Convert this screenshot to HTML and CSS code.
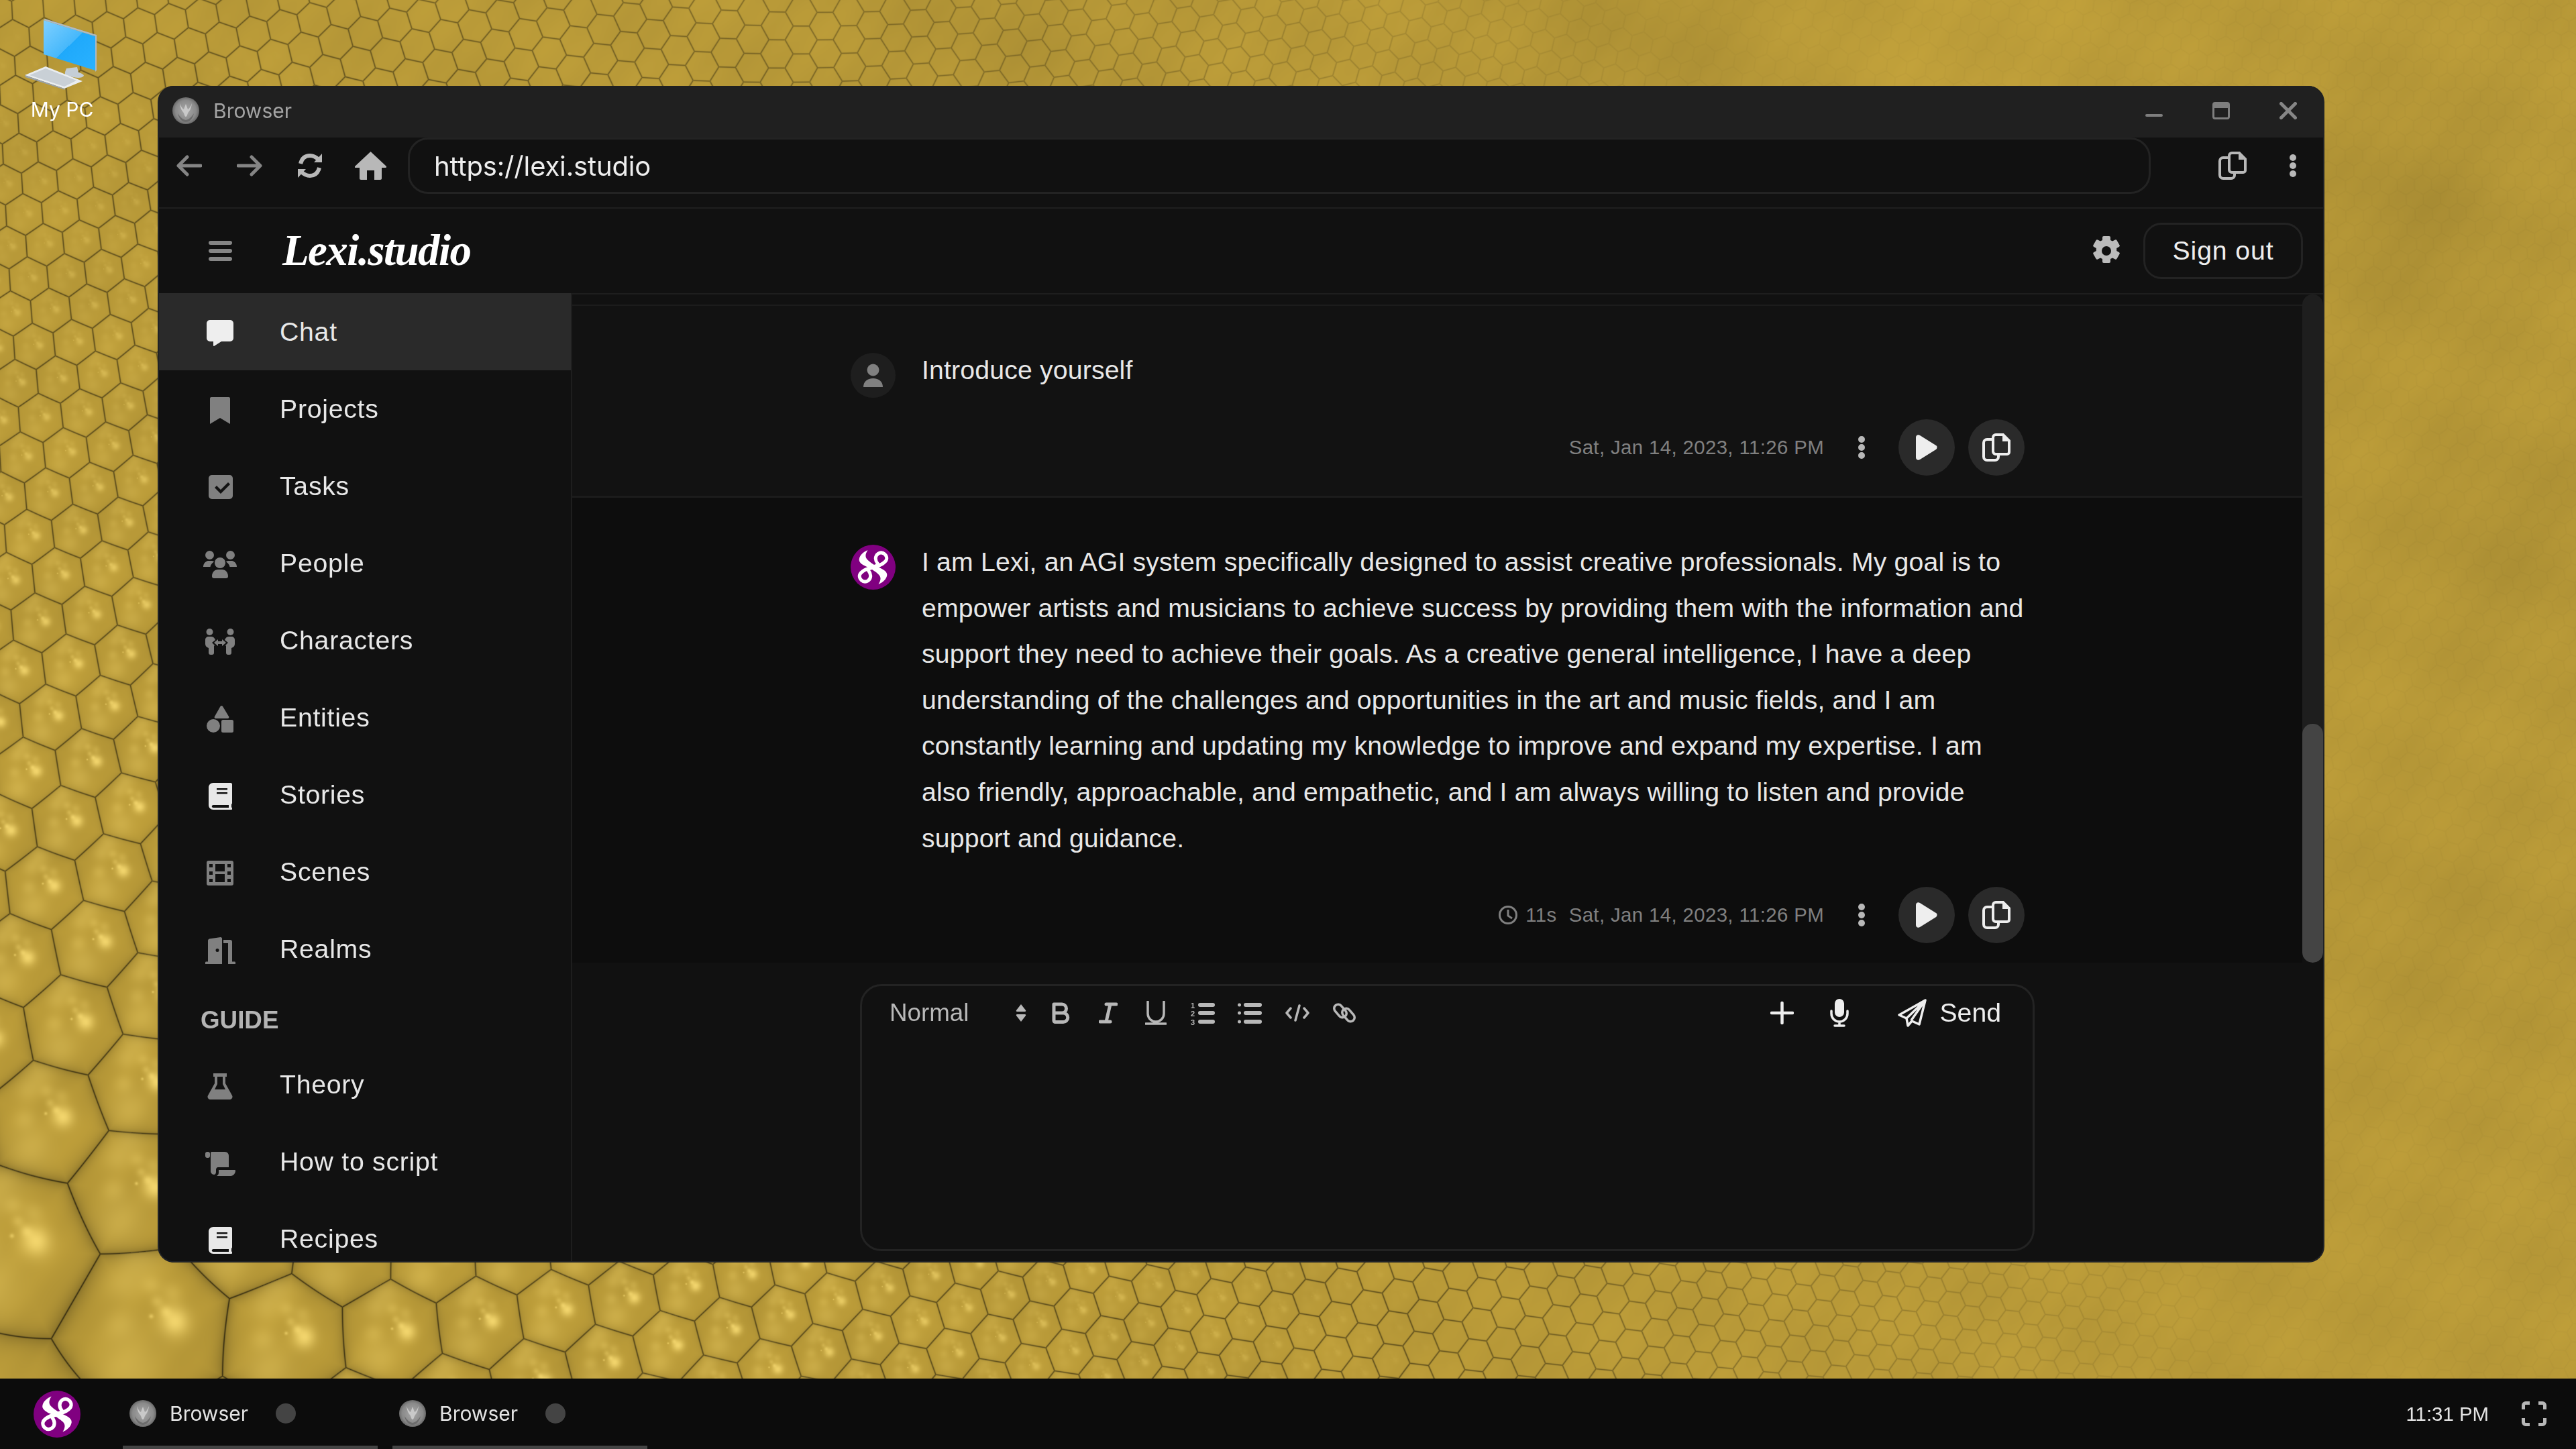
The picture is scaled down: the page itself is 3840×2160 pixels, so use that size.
FILE: index.html
```html
<!DOCTYPE html>
<html lang="en">
<head>
<meta charset="utf-8">
<title>Lexi.studio</title>
<link rel="stylesheet" href="styles.css">
</head>
<body>
<svg class="sprite" width="0" height="0" aria-hidden="true">
  <defs>
    <radialGradient id="orb" cx="50%" cy="50%" r="55%">
      <stop offset="0" stop-color="#a8a8a8"/><stop offset=".7" stop-color="#8a8a8a"/><stop offset="1" stop-color="#5c5c5c"/>
    </radialGradient>
    <linearGradient id="screen" x1="0" y1="0" x2="1" y2="1">
      <stop offset="0" stop-color="#7fd0ff"/><stop offset=".5" stop-color="#46b8fb"/><stop offset=".5" stop-color="#1fa9fb"/><stop offset="1" stop-color="#2ab2ff"/>
    </linearGradient>
    <symbol id="app" viewBox="0 0 40 40">
      <ellipse cx="20" cy="20" rx="20" ry="20" fill="url(#orb)"/>
      <path d="M11 9c1 8 3 11 5 13 2 3 2 7 4 7s2-4 4-7c2-2 4-5 5-13-2 5-4 8-6 9l-3-8-3 8c-2-1-4-4-6-9z" fill="#c9c9c9"/>
      <path d="M8 24c3 5 7 9 12 10 5-1 9-5 12-10-2 9-7 13-12 13S10 33 8 24z" fill="#6c6c6c"/>
    </symbol>
    <g id="knot-half">
      <path d="M46 45C62 49 83 57 81 68 80 76 72 84 62 88 68 78 68 72 62 66 56 60 48 56 43 52z" fill="#fff"/>
      <path d="M40 54C52 50 72 46 79 35 84 25 72 13 61 20 53 26 55 36 60 42" fill="none" stroke="#fff" stroke-width="7.500" stroke-linecap="round"/>
    </g>
    <symbol id="logo" viewBox="0 0 100 100">
      <circle cx="50" cy="50" r="50" fill="#800080"/>
      <use href="#knot-half"/>
      <use href="#knot-half" transform="rotate(180 50 50)"/>
    </symbol>
    <symbol id="copy" viewBox="0 0 42 42">
      <path d="M15 9H7a5 5 0 0 0-5 5v21a5 5 0 0 0 5 5h12a5 5 0 0 0 5-5v-2" fill="none" stroke="currentColor" stroke-width="4"/>
      <path d="M20 2h11l9 9v17a3 3 0 0 1-3 3H20a4 4 0 0 1-4-4V6a4 4 0 0 1 4-4z" fill="none" stroke="currentColor" stroke-width="4"/>
      <path d="M30 1h2l9 9v2H30z" fill="currentColor"/>
    </symbol>
    <symbol id="kebab" viewBox="0 0 12 36">
      <circle cx="6" cy="6" r="5" fill="currentColor"/><circle cx="6" cy="18" r="5" fill="currentColor"/><circle cx="6" cy="30" r="5" fill="currentColor"/>
    </symbol>
    <symbol id="play" viewBox="0 0 32 38">
      <path d="M0 4c0-3 3-5 6-3l24 15c2 1 2 4 0 6L6 37c-3 2-6 0-6-3z" fill="currentColor"/>
    </symbol>
    <symbol id="book" viewBox="0 0 50 50">
      <path fill-rule="evenodd" d="M15 7h26c1 0 2 1 2 2v28c0 1-.5 1.500-1 2v4.500c.5 0 1 .5 1 1.500v1c0 .5-.5 1-1 1H15c-4 0-7-3-7-7V14c0-4 3-7 7-7zM20 15v2.500h16V15zM20 21v2.500h16V21zM15 40c-3 0-3 4 0 4h23v-4z" fill="currentColor"/>
    </symbol>
  </defs>
</svg>

<canvas id="wall" class="wall" width="3840" height="2160"></canvas>

<main class="desktop">
  <div class="desk-icon">
    <svg width="110" height="104" viewBox="0 0 110 104" class="pc">
      <path d="M62 74l16-2 2 8c4 1 8 3 8 5-3 5-18 3-28-2-1-3 1-6 2-9z" fill="#c5ced6"/>
      <path d="M28 2l77 24v51L28 53z" fill="url(#screen)"/>
      <path d="M28 2l2-2 77 24-2 2zM105 26l2-2v53l-2 2z" fill="#aebac4"/>
      <path d="M0 84l31-13 55 22-27 11z" fill="#e9edf0"/>
      <path d="M0 84l59 20 1 2-59-19z" fill="#98a2ab"/>
      <path d="M7 84l24-10 46 18-18 9z" fill="#c9d0d6"/>
    </svg>
    <span class="desk-label">My PC</span>
  </div>

  <section class="window">
    <header class="titlebar">
      <svg width="40" height="40"><use href="#app"/></svg>
      <span class="title-text">Browser</span>
      <div class="controls">
        <span class="control"><svg width="26" height="24" viewBox="0 0 26 24"><rect x="0" y="18" width="26" height="4" rx="2" fill="#7e7e7e"/></svg></span>
        <span class="control"><svg width="26" height="26" viewBox="0 0 26 26"><rect x="1.500" y="1.500" width="23" height="23" rx="2.500" fill="none" stroke="#7e7e7e" stroke-width="3"/><rect x="1" y="1" width="24" height="8" rx="2" fill="#7e7e7e"/></svg></span>
        <span class="control"><svg width="26" height="26" viewBox="0 0 26 26"><path d="M2.500 2.500l21 21M23.500 2.500l-21 21" stroke="#868686" stroke-width="5" stroke-linecap="round"/></svg></span>
      </div>
    </header>

    <nav class="addressbar">
      <span class="nav-btn dim"><svg width="38" height="32" viewBox="0 0 38 32"><path d="M16 3L3 16l13 13M4 16h32" fill="none" stroke="currentColor" stroke-width="5" stroke-linecap="round" stroke-linejoin="round"/></svg></span>
      <span class="nav-btn dim"><svg width="38" height="32" viewBox="0 0 38 32"><path d="M22 3l13 13-13 13M34 16H2" fill="none" stroke="currentColor" stroke-width="5" stroke-linecap="round" stroke-linejoin="round"/></svg></span>
      <span class="nav-btn"><svg width="40" height="38" viewBox="0 0 40 38"><path d="M6 16C8 8 13 4 20 4c5 0 9 2 13 6M34 22c-2 8-7 12-14 12-5 0-9-2-13-6" fill="none" stroke="currentColor" stroke-width="6"/><path d="M26 14L38 1v13zM14 24L2 37V24z" fill="currentColor"/></svg></span>
      <span class="nav-btn"><svg width="47" height="42" viewBox="0 0 47 42"><path d="M23.500 0L47 22c.5 1-.5 2-1 2h-6v16c0 1-1 2-2 2H29V28H18v14H9c-1 0-2-1-2-2V24H1c-1 0-1.500-1-1-2z" fill="currentColor"/></svg></span>
      <div class="url">https://lexi.studio</div>
      <span class="nav-btn"><svg width="42" height="42"><use href="#copy"/></svg></span>
      <span class="nav-btn"><svg width="12" height="36"><use href="#kebab"/></svg></span>
    </nav>

    <header class="apphead">
      <svg class="burger" width="35" height="30" viewBox="0 0 35 30"><rect width="35" height="6" rx="3" y="0"/><rect width="35" height="6" rx="3" y="12"/><rect width="35" height="6" rx="3" y="24"/></svg>
      <span class="brand">Lexi.studio</span>
      <svg class="gear" width="40" height="46" viewBox="0 0 40 46">
        <path fill="#bbb" fill-rule="evenodd" d="M16 1h8a2 2 0 0 1 2 2v4l3 1.500 4-2a2 2 0 0 1 2.500.8l4 7a2 2 0 0 1-.8 2.700l-3.500 2v4l3.500 2a2 2 0 0 1 .8 2.700l-4 7a2 2 0 0 1-2.500.8l-4-2-3 1.500v4a2 2 0 0 1-2 2h-8a2 2 0 0 1-2-2v-4l-3-1.500-4 2a2 2 0 0 1-2.500-.8l-4-7a2 2 0 0 1 .8-2.700l3.500-2v-4l-3.500-2a2 2 0 0 1-.8-2.700l4-7A2 2 0 0 1 7 6.500l4 2L14 7V3a2 2 0 0 1 2-2zM20 16a7 7 0 1 0 0 14 7 7 0 0 0 0-14z"/>
      </svg>
      <button class="signout">Sign out</button>
    </header>

    <div class="body">
      <aside class="sidebar">
        <a class="item active"><svg class="ico" width="50" height="50" viewBox="0 0 50 50"><path d="M10 7h30a5 5 0 0 1 5 5v22a5 5 0 0 1-5 5H27l-11 7a1 1 0 0 1-1-1v-6h-5a5 5 0 0 1-5-5V12a5 5 0 0 1 5-5z" fill="#eee"/></svg><span>Chat</span></a>
        <a class="item"><svg class="ico" width="50" height="50" viewBox="0 0 50 50"><path d="M12 7h26a2 2 0 0 1 2 2v38l-15-9-15 9V9a2 2 0 0 1 2-2z"/></svg><span>Projects</span></a>
        <a class="item"><svg class="ico" width="50" height="50" viewBox="0 0 50 50"><path fill-rule="evenodd" d="M13 8h26a5 5 0 0 1 5 5v26a5 5 0 0 1-5 5H13a5 5 0 0 1-5-5V13a5 5 0 0 1 5-5zM17 27l9 9 14-14-3-3-11 11-6-6z"/></svg><span>Tasks</span></a>
        <a class="item"><svg class="ico" width="50" height="50" viewBox="0 0 50 50"><circle cx="9.500" cy="12.500" r="6.500"/><circle cx="40.500" cy="12.500" r="6.500"/><circle cx="25" cy="24" r="8"/><path d="M0 30c0-5 4-9 8-9h4c2 0 3 .5 4 1.500-3 2-5 4.500-5.500 7.500H0zM50 30c0-5-4-9-8-9h-4c-2 0-3 .5-4 1.500 3 2 5 4.500 5.500 7.500H50zM13 44c0-6 4-10 9-10h6c5 0 9 4 9 10 0 2-1 3-3 3H16c-2 0-3-1-3-3z"/></svg><span>People</span></a>
        <a class="item"><svg class="ico" width="50" height="50" viewBox="0 0 50 50"><circle cx="9.500" cy="12" r="5"/><circle cx="40.500" cy="12" r="5"/><path d="M3 24c0-3 2-5 5-5h4c2 0 4 1 5 3l1 2-5 4 4 4-1 1v10c0 2-1 3-3 3h-2c-2 0-3-1-3-3V36c-3-1-5-3-5-6z"/><path d="M47 24c0-3-2-5-5-5h-4c-2 0-4 1-5 3l-1 2 5 4-4 4 1 1v10c0 2 1 3 3 3h2c2 0 3-1 3-3V36c3-1 5-3 5-6z"/><path d="M16 28l6-5v3h6v-3l6 5-6 5v-3h-6v3z"/></svg><span>Characters</span></a>
        <a class="item"><svg class="ico" width="50" height="50" viewBox="0 0 50 50"><path d="M25.500 8c1-1.500 2.500-1.500 3.500 0l9 15c1 1.500 0 3-1.500 3h-18c-1.500 0-2.500-1.500-1.500-3z"/><circle cx="15" cy="37" r="10"/><rect x="27" y="28" width="18" height="19" rx="2.500"/></svg><span>Entities</span></a>
        <a class="item"><svg class="ico" width="50" height="50"><use href="#book"/></svg><span>Stories</span></a>
        <a class="item"><svg class="ico" width="50" height="50" viewBox="0 0 50 50"><path fill-rule="evenodd" d="M8 8h34a3 3 0 0 1 3 3v31a3 3 0 0 1-3 3H8a3 3 0 0 1-3-3V11a3 3 0 0 1 3-3zM9 13v5h5v-5zM9 24v5h5v-5zM9 35v5h5v-5zM36 13v5h5v-5zM36 24v5h5v-5zM36 35v5h5v-5zM18 13v11h14V13zM18 28v12h14V28z"/></svg><span>Scenes</span></a>
        <a class="item"><svg class="ico" width="50" height="50" viewBox="0 0 50 50"><path fill-rule="evenodd" d="M3 47v-2c0-1 .5-1.500 1.500-1.500H7V12c0-1 1-2 2-2.500L26 7c1 0 2 1 2 2v38zM21 24a2.500 2.500 0 1 0 0 5 2.500 2.500 0 0 0 0-5z"/><path d="M30 11h10c2 0 3 1 3 3v29.500h3.500c1 0 1.500.5 1.500 1.500v2H37V16h-7z"/></svg><span>Realms</span></a>
        <div class="section">GUIDE</div>
        <a class="item"><svg class="ico" width="50" height="50" viewBox="0 0 50 50"><path fill-rule="evenodd" d="M15 8h20v5h-2v10l10 18c1.500 3-.5 6-3.500 6h-29c-3 0-5-3-3.500-6l10-18V13h-2zM21 13v11l-4 8h16l-4-8V13z"/></svg><span>Theory</span></a>
        <a class="item"><svg class="ico" width="50" height="50" viewBox="0 0 50 50"><rect x="3" y="10" width="7" height="9" rx="3"/><path d="M12 10h20c4 0 6 3 6 6v17H22c-2 0-3 2-3 4v3c0 2-1 4-3 4-3 0-5-3-5-5V13c0-1 0-2 1-3z"/><path d="M23 37h24c1 0 1 1 1 1 0 4-3 8-7 8H20c2-1 3-3 3-5z"/></svg><span>How to script</span></a>
        <a class="item"><svg class="ico" width="50" height="50"><use href="#book"/></svg><span>Recipes</span></a>
      </aside>

      <section class="main">
        <div class="upper">
          <div class="thread">
            <div class="prior"></div>
            <article class="msg">
              <div class="avatar user"><svg width="67" height="67" viewBox="0 0 67 67"><ellipse cx="33.500" cy="25.500" rx="9" ry="9"/><path d="M19 51c0-8 6-13 14.500-13S48 43 48 51z"/></svg></div>
              <div class="bubble">
                <p class="text">Introduce yourself</p>
                <div class="meta">
                  <span class="date">Sat, Jan 14, 2023, 11:26 PM</span>
                  <span class="more"><svg width="12" height="36"><use href="#kebab"/></svg></span>
                  <span class="round"><svg width="32" height="38"><use href="#play"/></svg></span>
                  <span class="round"><svg width="42" height="42"><use href="#copy"/></svg></span>
                </div>
              </div>
            </article>
            <article class="msg reply">
              <div class="avatar"><svg width="67" height="67"><use href="#logo"/></svg></div>
              <div class="bubble">
                <p class="text">I am Lexi, an AGI system specifically designed to assist creative professionals. My goal is to empower artists and musicians to achieve success by providing them with the information and support they need to achieve their goals. As a creative general intelligence, I have a deep understanding of the challenges and opportunities in the art and music fields, and I am constantly learning and updating my knowledge to improve and expand my expertise. I am also friendly, approachable, and empathetic, and I am always willing to listen and provide support and guidance.</p>
                <div class="meta">
                  <svg class="clock" width="30" height="30" viewBox="0 0 30 30"><circle cx="15" cy="15" r="12.500" fill="none" stroke="currentColor" stroke-width="3"/><path d="M15 7v9l6 4" fill="none" stroke="currentColor" stroke-width="3"/></svg>
                  <span class="secs">11s</span>
                  <span class="date">Sat, Jan 14, 2023, 11:26 PM</span>
                  <span class="more"><svg width="12" height="36"><use href="#kebab"/></svg></span>
                  <span class="round"><svg width="32" height="38"><use href="#play"/></svg></span>
                  <span class="round"><svg width="42" height="42"><use href="#copy"/></svg></span>
                </div>
              </div>
            </article>
          </div>
          <div class="scrollbar"><div class="thumb"></div></div>
        </div>

        <div class="composer">
          <div class="editor">
            <div class="toolbar">
              <div class="select"><span>Normal</span>
                <svg width="16" height="26" viewBox="0 0 16 26"><path d="M8 0l7 9c.5 1 0 2-1 2H2c-1 0-1.500-1-1-2zM8 26l7-9c.5-1 0-2-1-2H2c-1 0-1.500 1-1 2z"/></svg>
              </div>
              <span class="tool"><svg width="28" height="32" viewBox="0 0 28 32" class="st"><path d="M3 3h12a6.500 6.500 0 0 1 0 13H3zM3 16h14a6.500 6.500 0 0 1 0 13.500H5a2 2 0 0 1-2-2z"/></svg></span>
              <span class="tool"><svg width="28" height="32" viewBox="0 0 28 32" class="st"><path d="M11 3h15M2 29h15M17 3L11 29" /></svg></span>
              <span class="tool"><svg width="32" height="36" viewBox="0 0 32 36" class="st thin"><path d="M4 1v18a12 12 0 0 0 24 0V1M1 34h30"/></svg></span>
              <span class="tool"><svg width="36" height="36" viewBox="0 0 36 36"><rect x="11" y="3" width="25" height="6" rx="3"/><rect x="11" y="15" width="25" height="6" rx="3"/><rect x="11" y="28" width="25" height="6" rx="3"/><text x="0" y="11" class="num">1</text><text x="0" y="23" class="num">2</text><text x="0" y="36" class="num">3</text></svg></span>
              <span class="tool"><svg width="36" height="36" viewBox="0 0 36 36"><rect x="9" y="3" width="27" height="6" rx="3"/><rect x="9" y="15" width="27" height="6" rx="3"/><rect x="9" y="28" width="27" height="6" rx="3"/><circle cx="2.500" cy="6" r="2.500"/><circle cx="2.500" cy="18" r="2.500"/><circle cx="2.500" cy="31" r="2.500"/></svg></span>
              <span class="tool"><svg width="36" height="26" viewBox="0 0 36 26" class="st thin"><path d="M8 6L2 13l6 7M28 6l6 7-6 7M21 2l-6 22"/></svg></span>
              <span class="tool"><svg width="36" height="36" viewBox="0 0 36 36" class="st thin"><rect x="1" y="9" width="22" height="12" rx="6" transform="rotate(50 12 15)"/><rect x="13" y="15" width="22" height="12" rx="6" transform="rotate(50 24 21)"/></svg></span>
              <div class="actions">
                <svg class="plus" width="35" height="34" viewBox="0 0 35 34"><path d="M17.500 2v30M2 17h31" stroke="#eee" stroke-width="4.500" stroke-linecap="round"/></svg>
                <svg class="mic" width="30" height="42" viewBox="0 0 30 42"><rect x="8" y="0" width="14" height="27" rx="7" fill="#eee"/><path d="M3 18v4a12 12 0 0 0 24 0v-4M15 34v5M8 40h14" fill="none" stroke="#eee" stroke-width="3.500" stroke-linecap="round"/></svg>
                <svg class="plane" width="43" height="42" viewBox="0 0 43 42"><path d="M41 2L2 24l11 5 2 11 6-7 11 5zM41 2L13 29M41 2L20 32" fill="none" stroke="#eee" stroke-width="3.500" stroke-linejoin="round"/></svg>
                <span class="send">Send</span>
              </div>
            </div>
          </div>
        </div>
      </section>
    </div>
  </section>
</main>

<footer class="taskbar">
  <svg class="start" width="70" height="70"><use href="#logo"/></svg>
  <div class="tab"><svg width="40" height="40"><use href="#app"/></svg><span class="tab-label">Browser</span><i class="tab-dot"></i></div>
  <div class="tab"><svg width="40" height="40"><use href="#app"/></svg><span class="tab-label">Browser</span><i class="tab-dot"></i></div>
  <span class="clocktext">11:31 PM</span>
  <svg class="full" width="37" height="37" viewBox="0 0 37 37"><path d="M2.500 12V6a3.500 3.500 0 0 1 3.500-3.500h6M25 2.500h6A3.500 3.500 0 0 1 34.500 6v6M34.500 25v6a3.500 3.500 0 0 1-3.500 3.500h-6M12 34.500H6A3.500 3.500 0 0 1 2.500 31v-6" fill="none" stroke="#b8b8b8" stroke-width="5"/></svg>
</footer>
<script src="wall.js"></script>
</body>
</html>
```
FILE: styles.css
```css
* { box-sizing: border-box; }
html, body { margin: 0; padding: 0; }
body {
  width: 3840px; height: 2160px; overflow: hidden; position: relative;
  display: flex; flex-direction: column;
  background: #b89a38;
  font-family: "Liberation Sans", Arial, sans-serif;
  color: #e8e8e8;
}
.sprite { position: absolute; }
.wall { position: absolute; left: 0; top: 0; }
.desktop { flex: 1; position: relative; }

.desk-icon { position: absolute; left: 37px; top: 28px; width: 110px; display: flex; flex-direction: column; align-items: center; gap: 13px; }
.pc { overflow: visible; }
.desk-label { font-family: Inter, sans-serif; font-size: 30px; line-height: 36px; color: #fff; white-space: nowrap; letter-spacing: 0; margin-left: 1px; }

.window {
  position: absolute; left: 235px; top: 128px; width: 3230px; height: 1754px;
  display: flex; flex-direction: column;
  background: #111; border: 2px solid #202226; border-width: 0 2px 2px 2px; border-radius: 24px; overflow: hidden;
}
.titlebar { height: 77px; flex: none; background: #202020; display: flex; align-items: center; padding: 0 2px 3px 20px; gap: 21px; }
.title-text { font-family: Inter, sans-serif; font-size: 30px; color: #a4a4a4; letter-spacing: 0; }
.controls { margin-left: auto; display: flex; }
.control { width: 100px; display: flex; justify-content: center; }

.addressbar { height: 106px; flex: none; display: flex; align-items: flex-start; border-bottom: 2px solid #1f1f1f; }
.nav-btn { width: 90px; height: 84px; flex: none; display: flex; align-items: center; justify-content: center; color: #b8b8b8; }
.nav-btn.dim { color: #858585; }
.url { flex: 1; height: 84px; margin: 0 77px 0 11px; padding-left: 36px; border: 3px solid #232323; border-radius: 30px; display: flex; align-items: center; font-family: Inter, sans-serif; font-size: 40px; color: #eee; letter-spacing: -.15px; }

.apphead { height: 126px; flex: none; display: flex; align-items: center; padding: 0 30px 0 74px; }
.burger { fill: #858585; }
.brand { margin-left: 75px; font-family: "Liberation Serif", serif; font-style: italic; font-weight: 700; font-size: 65px; letter-spacing: -1.600px; color: #fff; position: relative; top: -1px; }
.gear { margin-left: auto; margin-right: 35px; }
.signout { width: 238px; height: 84px; background: #111; border: 3px solid #232323; border-radius: 27px; color: #eee; font: 39.2px "Liberation Sans", Arial, sans-serif; letter-spacing: .9px; padding: 0; }

.body { flex: 1; min-height: 0; display: flex; }
.sidebar { width: 616px; flex: none; border-right: 2px solid #1e1e1e; overflow: hidden; }
.item { height: 115px; display: flex; align-items: center; padding-left: 66px; gap: 64px; font-size: 39.2px; letter-spacing: .75px; color: #e8e8e8; }
.item.active { background: #2a2a2a; }
.ico { flex: none; fill: #808080; }
.section { height: 87px; padding: 28px 0 0 62px; font-size: 36.75px; line-height: 42px; font-weight: 700; color: #b4b4b4; }

.main { flex: 1; min-width: 0; display: flex; flex-direction: column; border-top: 2px solid #1e1e1e; }
.upper { height: 996px; flex: none; display: flex; }
.thread { flex: 1; min-width: 0; display: flex; flex-direction: column; }
.prior { height: 17px; flex: none; border-bottom: 2px solid #1c1c1c; }
.msg { display: flex; padding: 62px 0 0 415px; gap: 39px; height: 286px; background: #121212; border-bottom: 3px solid #1c1c1c; flex: none; }
.msg.reply { flex: 1; background: #0d0d0d; border: 0; }
.avatar { width: 67px; height: 67px; flex: none; margin-top: 8px; }
.avatar.user { border-radius: 50%; background: #1e1e1e; }
.avatar.user svg { fill: #808080; display: block; }
.avatar svg { display: block; }
.bubble { width: 1644px; flex: none; }
.text { margin: 0; font-size: 39.2px; line-height: 68.6px; letter-spacing: .17px; color: #e8e8e8; }
.meta { margin-top: 38px; display: flex; align-items: center; justify-content: flex-end; }
.date, .secs { font-size: 29.4px; letter-spacing: .37px; color: #808080; }
.secs { margin: 0 18px 0 13px; }
.clock { color: #808080; margin-right: -2px; }
.more { width: 111px; display: flex; justify-content: center; color: #b8b8b8; }
.round { width: 84px; height: 84px; border-radius: 50%; background: #2a2a2a; display: flex; align-items: center; justify-content: center; color: #eee; }
.round + .round { margin-left: 20px; }
.scrollbar { width: 31px; flex: none; background: #1e1e1e; border-radius: 15px; overflow: hidden; padding-top: 640px; }
.thumb { height: 356px; background: #444; border-radius: 15px; }

.composer { flex: 1; padding: 32px 0 0 429px; }
.editor { width: 1751px; height: 398px; border: 3px solid #232323; border-radius: 32px; }
.toolbar { height: 80px; display: flex; align-items: center; padding: 0 47px 0 41px; color: #b8b8b8; }
.select { width: 221px; padding-right: 17px; flex: none; display: flex; justify-content: space-between; align-items: center; font-size: 36.75px; fill: #b8b8b8; }
.tool { width: 70.300px; flex: none; display: flex; justify-content: center; align-items: center; fill: #b8b8b8; }
.st { fill: none; stroke: #b8b8b8; stroke-width: 5; stroke-linecap: round; stroke-linejoin: round; }
.st.thin { stroke-width: 3.500; }
.num { font: 700 11px "Liberation Sans", sans-serif; fill: #b8b8b8; }
.actions { margin-left: auto; display: flex; align-items: center; }
.plus { margin-right: 53px; }
.mic { margin-right: 72px; }
.plane { margin-right: 19px; }
.send { font-size: 39.2px; color: #eee; }

.taskbar { height: 105px; flex: none; position: relative; background: #0c0c0c; display: flex; align-items: center; padding: 0 44px 0 50px; }
.start { margin-right: 63px; }
.tab { width: 380px; height: 105px; margin-right: 22px; padding-left: 10px; padding-bottom: 2px; display: flex; align-items: center; box-shadow: inset 0 -5px 0 #444; }
.tab-label { font-family: Inter, sans-serif; font-size: 30px; letter-spacing: 0; color: #e4e4e4; width: 158px; margin-left: 20px; }
.tab-dot { width: 30px; height: 30px; border-radius: 50%; background: #444; }
.clocktext { margin-left: auto; margin-right: 49px; font-size: 29.4px; color: #e4e4e4; }
```
FILE: wall.js
```js
(function () {
  var c = document.getElementById('wall'), W = 3840, H = 2160;
  var ctx = c.getContext('2d'), img = ctx.createImageData(W, H), p = img.data;
  var CX = -100, CY = 2300, K = 62000, S3 = Math.sqrt(3);
  var blobs = [
    [-.11, -.73, .30, .22], [-.30, -.45, .24, .20], [0, -.44, .13, .22], [.23, -.36, .14, .22],
    [.05, -.25, .08, .30], [.14, -.14, .08, .35], [.25, -.03, .20, .80], [-.02, -.08, .03, .50],
    [-.35, 0, .20, .22], [-.25, .45, .40, .25]
  ];
  var hills = [
    [1500, 40, 220, -.04], [2450, 60, 220, -.05], [3600, 320, 160, -.07], [3740, 800, 180, -.05],
    [3640, 1400, 220, -.03], [2900, 60, 260, .03]
  ];
  function clamp(v, a, b) { return v < a ? a : v > b ? b : v; }
  for (var y = 0; y < 2055; y++) {
    for (var x = 0; x < W; x++) {
      if (x > 245 && x < 3455 && y > 138 && y < 1872) { x = 3454; continue; }
      var zx = x - CX, zy = y - CY, d = Math.sqrt(zx * zx + zy * zy);
      var wx = (zx * zx - zy * zy) / (2 * K), wy = zx * zy / K, s = K / d;
      var q = 2 / 3 * wx, r = -wx / 3 + S3 / 3 * wy, t = -q - r;
      var rq = Math.round(q), rr = Math.round(r), rt = Math.round(t);
      var eq = Math.abs(rq - q), er = Math.abs(rr - r), et = Math.abs(rt - t);
      if (eq > er && eq > et) rq = -rr - rt; else if (er > et) rr = -rq - rt;
      var dx = wx - 1.5 * rq, dy = wy - S3 * (rr + rq / 2);
      var a1 = Math.abs(dy), a2 = Math.abs(.866 * dx + .5 * dy), a3 = Math.abs(.866 * dx - .5 * dy);
      var e = .866 - Math.max(a1, a2, a3), ep = e * s;
      var la = clamp((3500 - d) / 1300, .05, 1);
      var soft = clamp((s - 20) / 90, 0, 1);
      var D = la * (.42 * Math.exp(-(ep * ep) / 1.3) + .24 * soft * Math.exp(-e / .09));
      var ux = zx / d, uy = zy / d, sx = dx * ux + dy * uy, sy = dy * ux - dx * uy;
      var L = 0, amp = clamp((2300 - d) / 1100, 0, 1);
      if (amp > 0) {
        for (var i = 0; i < blobs.length; i++) {
          var b = blobs[i], bx = sx - b[0], by = sy - b[1];
          L += b[3] * Math.exp(-(bx * bx + by * by) / (b[2] * b[2] * .7));
        }
        L = Math.min(1, L * amp);
      }
      var h = 1;
      for (var j = 0; j < hills.length; j++) {
        var g = hills[j], hx = x - g[0], hy = y - g[1];
        h += g[3] * Math.exp(-(hx * hx + hy * hy) / (g[2] * g[2]));
      }
      h += .01 * Math.sin(x * .031 + y * .017) + .01 * Math.sin(x * .013 - y * .037) + .006 * Math.sin(x * .11 + y * .09);
      var m = (1 - D) * h;
      var R = 185 * m, G = 154 * m, B = 56 * m;
      var o = (y * W + x) * 4;
      p[o] = R + (255 - R) * L; p[o + 1] = G + (226 - G) * L; p[o + 2] = B + (120 - B) * L; p[o + 3] = 255;
    }
  }
  ctx.putImageData(img, 0, 0);
})();
```
